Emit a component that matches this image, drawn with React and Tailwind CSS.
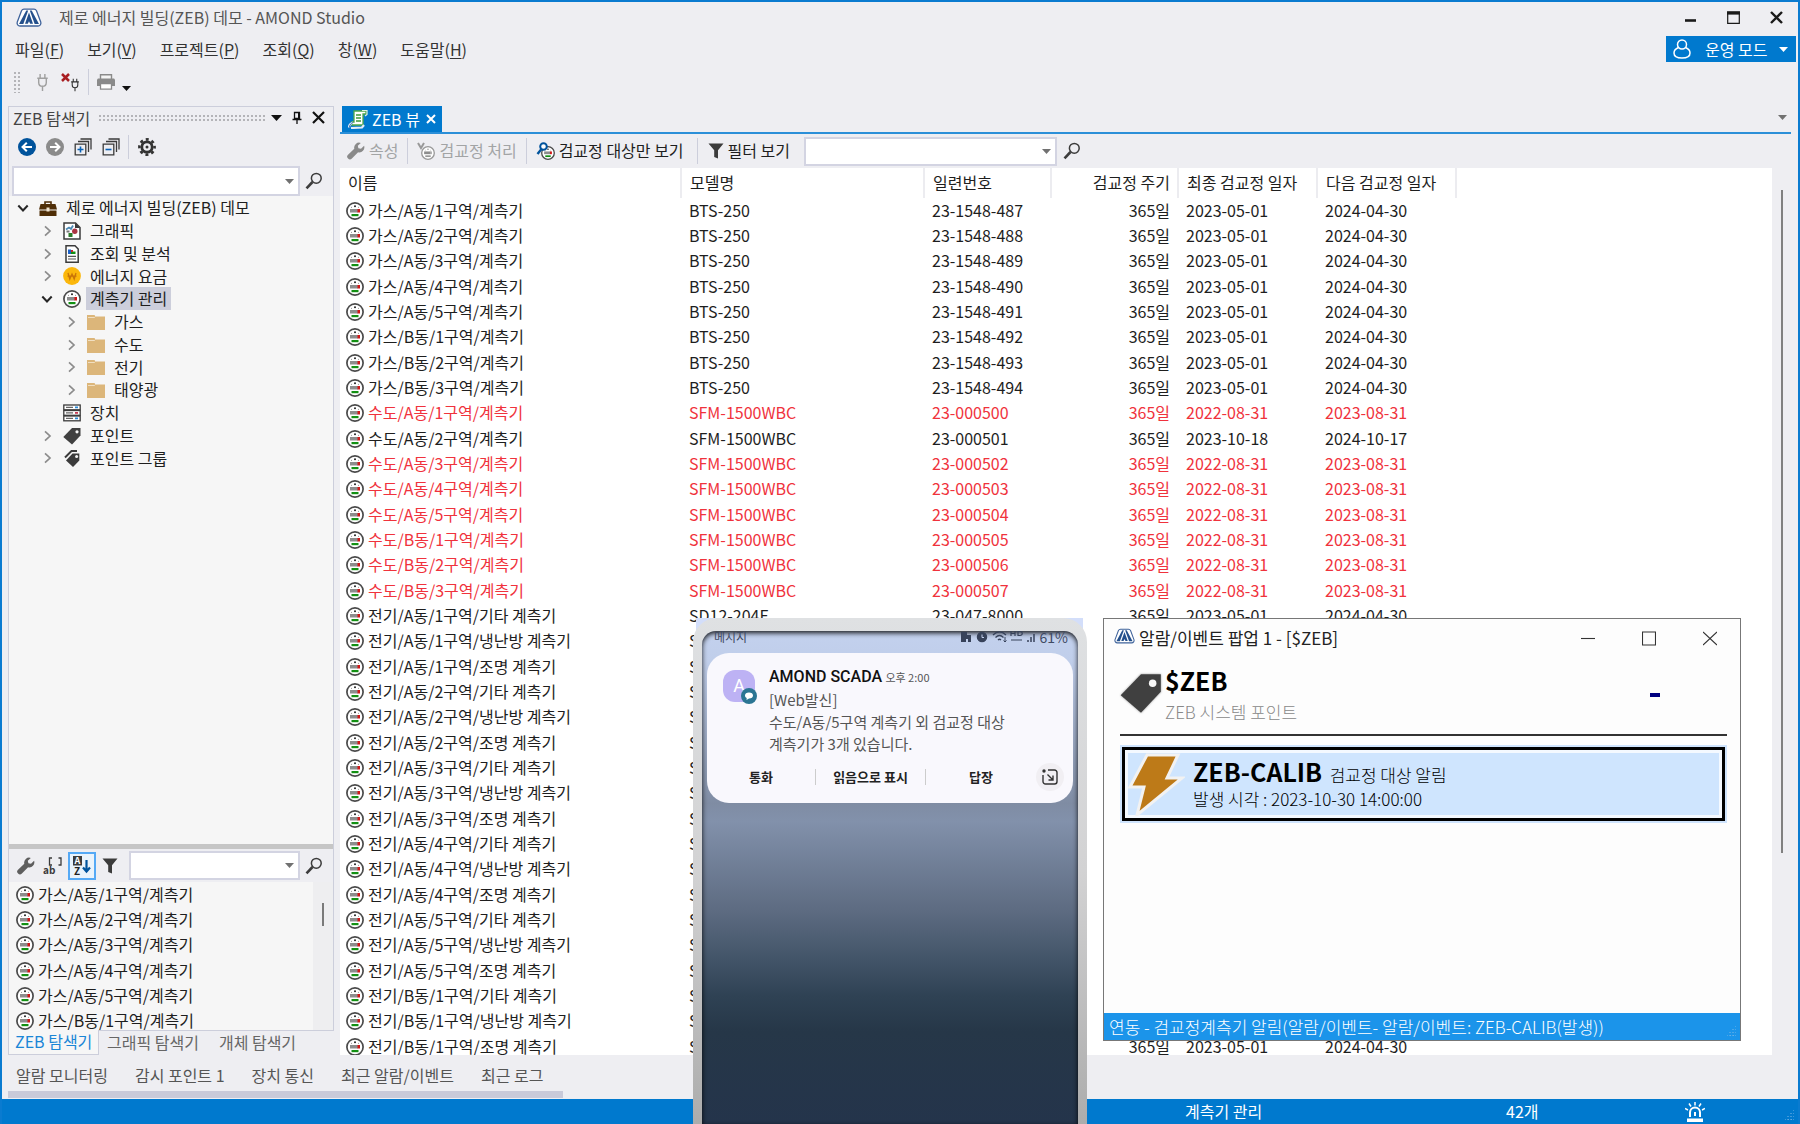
import { useState } from 'react';
import clsx from 'clsx';

const LIST_NAMES = ['A동/1', 'A동/2', 'A동/3', 'A동/4', 'A동/5', 'B동/1', 'B동/2', 'B동/3'];

function buildRows() {
  const rows = [];
  LIST_NAMES.forEach((n, i) => {
    rows.push({ name: `가스/${n}구역/계측기`, model: 'BTS-250', serial: `23-1548-${487 + i}`, last: '2023-05-01', next: '2024-04-30' });
  });
  LIST_NAMES.forEach((n, i) => {
    const done = i === 1;
    rows.push({
      name: `수도/${n}구역/계측기`,
      model: 'SFM-1500WBC',
      serial: `23-000${500 + i}`,
      last: done ? '2023-10-18' : '2022-08-31',
      next: done ? '2024-10-17' : '2023-08-31',
      overdue: !done,
    });
  });
  LIST_NAMES.slice(0, 6).forEach((n, i) => {
    ['기타', '냉난방', '조명'].forEach((kind, k) => {
      rows.push({ name: `전기/${n}구역/${kind} 계측기`, model: 'SD12-204F', serial: `23-047-${8000 + i * 3 + k}`, last: '2023-05-01', next: '2024-04-30' });
    });
  });
  return rows;
}

const ROWS = buildRows();

/* ---------- icons ---------- */

function Logo({ className }) {
  return (
    <svg viewBox="0 0 26 19" className={className}>
      <path d="M8 1.2h10a3 3 0 0 1 2.500 1.500l4.300 11.500a3 3 0 0 1-2.800 3.800H4a3 3 0 0 1-2.800-3.800L5.500 2.700A3 3 0 0 1 8 1.200z" fill="#fff" stroke="#3f639b" strokeWidth="1.300" />
      <path d="M10.300 2.500h1.900L7.300 16H3z" fill="#24508c" />
      <path d="M13.800 2.500h1.900L23 16h-4.300z" fill="#24508c" />
      <path d="M13 4.500l4 11.300h-2.800L13 13.200l-1.200 2.600H9z" fill="#24508c" />
    </svg>
  );
}

function Meter({ gray, className = 'w-[18px] h-[18px]' }) {
  return (
    <svg viewBox="0 0 18 18" className={clsx('shrink-0', className)}>
      <circle cx="9" cy="9" r="8.100" fill="#fff" stroke={gray ? '#999' : '#4a4a4a'} strokeWidth="1.700" />
      <circle cx="9" cy="4.300" r="1" fill={gray ? '#999' : '#222'} />
      <circle cx="5.500" cy="5.300" r=".5" fill="#777" />
      <circle cx="12.500" cy="5.300" r=".5" fill="#777" />
      <rect x="4" y="7" width="8" height="3.500" fill="#8d8d8d" />
      <rect x="11.500" y="7" width="2.500" height="3.500" fill={gray ? '#aaa' : '#d01616'} />
      <rect x="5.500" y="12" width="7" height="2.200" fill={gray ? '#999' : '#129012'} />
    </svg>
  );
}

function Search() {
  return (
    <svg viewBox="0 0 18 18" className="w-[18px] h-[18px]">
      <circle cx="11.300" cy="6.300" r="4.900" fill="none" stroke="#3c3c3c" strokeWidth="1.500" />
      <path d="M7.500 10l-6 6.300" stroke="#3c3c3c" strokeWidth="2.600" />
    </svg>
  );
}

function Wrench({ color = '#5e5e5e' }) {
  return (
    <svg viewBox="0 0 18 18" className="w-[18px] h-[18px]">
      <path d="M13.800.9a5 5 0 0 0-6.500 5.900L1 12.700a2.600 2.600 0 0 0 3.900 3.800l6.200-6.300a5 5 0 0 0 6-6.400L14 6.700l-2.600-.500-.6-2.500z" fill={color} />
    </svg>
  );
}

function Funnel() {
  return (
    <svg viewBox="0 0 16 16" className="w-4 h-4">
      <path d="M.5.500h15L10 7.200V15.500L6.200 14V7.200z" fill="#3b3b3b" />
    </svg>
  );
}

function Caret({ color = '#1e1e1e', className = 'w-[9px] h-[5px]' }) {
  return (
    <svg viewBox="0 0 10 5" className={className} preserveAspectRatio="none">
      <path d="M0 0h10L5 5z" fill={color} />
    </svg>
  );
}

function Chevron({ open }) {
  return open ? (
    <svg viewBox="0 0 12 12" className="w-3 h-3"><path d="M1.300 3.500L6 8.500l4.700-5" fill="none" stroke="#262626" strokeWidth="2" /></svg>
  ) : (
    <svg viewBox="0 0 12 12" className="w-3 h-3"><path d="M4 1.300L9 6l-5 4.700" fill="none" stroke="#8c8c8c" strokeWidth="1.700" /></svg>
  );
}

function Plug({ color, className }) {
  return (
    <svg viewBox="0 0 12 20" className={className} fill="none" stroke={color} strokeWidth="1.500">
      <path d="M3.500 1v4M8.500 1v4M.5 5.500h11M2 6v4c0 2.500 1.500 4 4 4s4-1.500 4-4V6M6 14v5" />
    </svg>
  );
}

function TreeIcon({ kind }) {
  const cls = 'w-[18px] h-[18px] shrink-0';
  switch (kind) {
    case 'case':
      return (
        <svg viewBox="0 0 18 18" className={cls}>
          <path d="M6 5V3h6v2" fill="none" stroke="#4f2e07" strokeWidth="1.600" />
          <path d="M1.500 5h15L18 10.500H0z" fill="#4f2e07" />
          <path d="M.5 11.500h17V17H.5z" fill="#4f2e07" />
          <rect x="7.500" y="8.500" width="3" height="4" fill="#f2e6d2" />
        </svg>
      );
    case 'graphic':
      return (
        <svg viewBox="0 0 18 18" className={cls}>
          <path d="M1 1h11.500L17 5.500V17H1z" fill="#fff" stroke="#3b3b3b" strokeWidth="1.500" />
          <path d="M12 1v5h5" fill="#3b3b3b" />
          <path d="M3 7.500l3-2 2 1.500 2-3.500" fill="none" stroke="#4d8bb5" strokeWidth="1.800" />
          <circle cx="11.800" cy="9.300" r="2.700" fill="#ab3442" />
          <rect x="5.500" y="11" width="4" height="4" fill="#2b7a2b" />
          <rect x="3.500" y="8.500" width="3" height="2" fill="#777" />
        </svg>
      );
    case 'report':
      return (
        <svg viewBox="0 0 18 18" className={cls}>
          <path d="M3 .8h9l3.200 3.200V17.200H3z" fill="#fff" stroke="#3b3b3b" strokeWidth="1.500" />
          <path d="M5 4.500h3V9H5z" fill="#1c62c9" />
          <path d="M8 6.500h4.500V9H8z" fill="#129012" />
          <path d="M8 5h2v2H8z" fill="#c92a2a" />
          <path d="M5 11.300h8M5 14h8" stroke="#555" strokeWidth="1.200" />
        </svg>
      );
    case 'won':
      return (
        <svg viewBox="0 0 18 18" className={cls}>
          <circle cx="9" cy="9" r="8.900" fill="#fbb70b" />
          <path d="M5 6l1.800 6L9 7l2.200 5L13 6M4.500 9.200h9" fill="none" stroke="#c97508" strokeWidth="1.300" />
        </svg>
      );
    case 'meter':
      return <Meter />;
    case 'folder':
      return (
        <svg viewBox="0 0 18 18" className={cls}>
          <path d="M0 2h7.500l1 1.500H18V17H0z" fill="#dcb67a" />
          <path d="M1 4.500h6.500l1-1" fill="none" stroke="#f6ead3" strokeWidth=".8" />
        </svg>
      );
    case 'device':
      return (
        <svg viewBox="0 0 18 18" className={cls}>
          {[1, 6.5, 12].map((y) => <rect key={y} x=".8" y={y} width="16.400" height="4.800" fill="#fff" stroke="#3b3b3b" strokeWidth="1.300" />)}
          <path d="M3 3.400h7M3 8.900h7M3 14.400h7" stroke="#666" strokeWidth="1.300" />
          <path d="M12 3.400h3M12 14.400h3" stroke="#2b8ad6" strokeWidth="1.700" />
          <path d="M12 8.900h3" stroke="#c3304a" strokeWidth="1.700" />
        </svg>
      );
    case 'group':
      return (
        <svg viewBox="0 0 18 18" className={cls}>
          <path d="M2 8.500L8.500 2H14" fill="none" stroke="#3b3b3b" strokeWidth="2" />
          <path d="M9.500 4.500h6.800v7L10 18l-7-6.500z" fill="#3b3b3b" />
          <circle cx="13.600" cy="7.500" r="1.500" fill="#f6f6f6" />
        </svg>
      );
    default:
      return <Tag className={cls} />;
  }
}

function Tag({ className }) {
  return (
    <svg viewBox="0 0 18 18" className={className}>
      <path d="M9 1h8.500v7.500L9 17.500.3 10z" fill="#404040" />
      <circle cx="14" cy="4.800" r="1.600" fill="#f6f6f6" />
    </svg>
  );
}

/* ---------- shared controls ---------- */

function Combo({ label, className }) {
  return (
    <div className={clsx('flex items-center border-2 border-[#d3d4e2] bg-white', className)}>
      <input aria-label={label} className="min-w-0 flex-1 h-full px-1 outline-none bg-transparent" />
      <button aria-label={`${label} 목록`} className="px-1"><Caret color="#717171" /></button>
    </div>
  );
}

function Divider({ className }) {
  return <span className={clsx('w-px bg-[#cccedb]', className)} />;
}

function ToolButton({ icon, children, disabled }) {
  return (
    <button disabled={disabled} className={clsx('flex items-center gap-1 whitespace-nowrap', disabled ? 'text-[#a2a4a5]' : 'text-[#1e1e1e]')}>
      {icon}
      <span className="pb-0.5">{children}</span>
    </button>
  );
}

/* ---------- window head ---------- */

const MENUS = [['파일', 'F'], ['보기', 'V'], ['프로젝트', 'P'], ['조회', 'Q'], ['창', 'W'], ['도움말', 'H']];

function Head() {
  return (
    <header className="shrink-0">
      <div className="h-8 flex items-center pl-[14px] pr-[15px] pb-0.5">
        <Logo className="w-[26px] h-[19px]" />
        <h1 className="ml-[17px] text-[#555]">제로 에너지 빌딩(ZEB) 데모 - AMOND Studio</h1>
        <div className="ml-auto flex items-center gap-[30px]">
          <button aria-label="최소화">
            <svg viewBox="0 0 13 13" className="w-[13px] h-[13px]"><path d="M1 9.500h11" stroke="#1a1a1a" strokeWidth="2.600" /></svg>
          </button>
          <button aria-label="최대화">
            <svg viewBox="0 0 13 13" className="w-[13px] h-[13px]"><path d="M.7 1h11.600v11.300H.7z" fill="none" stroke="#1a1a1a" strokeWidth="1.200" /><path d="M0 2h13" stroke="#1a1a1a" strokeWidth="3.200" /></svg>
          </button>
          <button aria-label="닫기">
            <svg viewBox="0 0 13 13" className="w-[13px] h-[13px]"><path d="M1 1l11 11M12 1L1 12" stroke="#1a1a1a" strokeWidth="2.400" /></svg>
          </button>
        </div>
      </div>
      <div className="h-8 flex items-center pl-[13px] pr-0.5 pb-0.5">
        <nav className="flex gap-[23px] text-[#333]">
          {MENUS.map(([name, key]) => (
            <button key={key}>{name}(<u className="underline-offset-2">{key}</u>)</button>
          ))}
        </nav>
        <button className="ml-auto w-[130px] h-[26px] flex items-center pl-[7px] pr-2 bg-[#0079ce] text-white">
          <svg viewBox="0 0 18 20" className="w-[18px] h-5" fill="none" stroke="#fff" strokeWidth="1.500">
            <circle cx="9" cy="5.500" r="4.500" />
            <path d="M5.500 8.500C2.500 9.800 1 11.800 1 14c0 3.300 3.500 5 8 5s8-1.700 8-5c0-2.200-1.500-4.200-4.500-5.500" />
          </svg>
          <span className="ml-[14px] mr-auto">운영 모드</span>
          <Caret color="#fff" />
        </button>
      </div>
      <div className="h-8 flex items-center pl-[11px]">
        <span className="w-2 h-[22px] bg-[radial-gradient(circle,#b4b4b8_1px,transparent_1px)] bg-[length:4px_4px]" />
        <button aria-label="연결" className="ml-[15px]"><Plug color="#a0a0a0" className="w-[13px] h-[19px]" /></button>
        <button aria-label="연결 끊기" className="ml-3 flex">
          <svg viewBox="0 0 9 9" className="w-[9px] h-[9px]"><path d="M1 1l7 7M8 1L1 8" stroke="#a81e22" strokeWidth="2.500" /></svg>
          <Plug color="#2f2f2f" className="w-[10px] h-[14px] mt-[5px]" />
        </button>
        <Divider className="ml-2 h-[26px]" />
        <button aria-label="인쇄" className="ml-2 flex items-center gap-[7px]">
          <svg viewBox="0 0 18 16" className="w-[18px] h-4">
            <path d="M3.500 5V.8h11V5" fill="#f4f4f4" stroke="#8a8a8a" strokeWidth="1.400" />
            <path d="M1 4.500h16l1 1V12H0V5.500z" fill="#8a8a8a" />
            <path d="M3.500 9.500h11v5.700h-11z" fill="#fff" stroke="#8a8a8a" strokeWidth="1.300" />
          </svg>
          <Caret color="#111" className="w-[9px] h-[5px] mt-3" />
        </button>
      </div>
    </header>
  );
}

/* ---------- left explorer ---------- */

const TREE = [
  { depth: 0, icon: 'case', label: '제로 에너지 빌딩(ZEB) 데모', open: true },
  { depth: 1, icon: 'graphic', label: '그래픽' },
  { depth: 1, icon: 'report', label: '조회 및 분석' },
  { depth: 1, icon: 'won', label: '에너지 요금' },
  { depth: 1, icon: 'meter', label: '계측기 관리', open: true },
  { depth: 2, icon: 'folder', label: '가스' },
  { depth: 2, icon: 'folder', label: '수도' },
  { depth: 2, icon: 'folder', label: '전기' },
  { depth: 2, icon: 'folder', label: '태양광' },
  { depth: 1, icon: 'device', label: '장치', leaf: true },
  { depth: 1, icon: 'tag', label: '포인트' },
  { depth: 1, icon: 'group', label: '포인트 그룹' },
];

const INDENT = ['pl-[7px]', 'pl-[31px]', 'pl-[55px]'];

function Tree() {
  const [selected, setSelected] = useState('계측기 관리');
  return (
    <ul className="flex-1 min-h-0 overflow-hidden bg-[#f6f6f6]">
      {TREE.map((n) => (
        <li key={n.label} className={clsx('h-[23px] nth-[4n]:h-[22px] flex items-center', INDENT[n.depth])}>
          <span className="w-[23px] pl-px">{!n.leaf && <Chevron open={n.open} />}</span>
          <TreeIcon kind={n.icon} />
          <button
            onClick={() => setSelected(n.label)}
            className={clsx('ml-[5px] h-[23px] px-1 pb-0.5 text-[#1e1e1e] whitespace-nowrap', selected === n.label && 'bg-[#cccedb]')}
          >
            {n.label}
          </button>
        </li>
      ))}
    </ul>
  );
}

function Explorer() {
  return (
    <aside className="w-[326px] shrink-0 flex flex-col">
      <div className="flex-1 min-h-0 flex flex-col border border-[#cccedb]">
        <div className="h-[21px] shrink-0 flex items-center pl-1 pr-2 text-[#444]">
          <h2>ZEB 탐색기</h2>
          <span className="ml-2 flex-1 h-2 bg-[radial-gradient(circle,#b4b4b8_1px,transparent_1px)] bg-[length:4px_4px]" />
          <button aria-label="패널 메뉴" className="ml-1"><Caret color="#111" className="w-[11px] h-[6px]" /></button>
          <button aria-label="고정" className="ml-[10px]">
            <svg viewBox="0 0 10 14" className="w-[10px] h-[14px]"><path d="M2.500 1.500h5v6h-5zM0.500 8.500h9M5 8.500V13" fill="none" stroke="#111" strokeWidth="1.300" /><path d="M6 1.500h1.500v6H6z" fill="#111" /></svg>
          </button>
          <button aria-label="닫기" className="ml-[10px]">
            <svg viewBox="0 0 13 13" className="w-[13px] h-[13px]"><path d="M1 1l11 11M12 1L1 12" stroke="#111" strokeWidth="2.200" /></svg>
          </button>
        </div>
        <div className="h-[38px] shrink-0 flex items-center pl-[9px] gap-[10px]">
          <button aria-label="뒤로">
            <svg viewBox="0 0 18 18" className="w-[18px] h-[18px]"><circle cx="9" cy="9" r="9" fill="#00539c" /><path d="M14 9H5M8.800 4.700L4.500 9l4.300 4.300" fill="none" stroke="#fff" strokeWidth="2" /></svg>
          </button>
          <button aria-label="앞으로">
            <svg viewBox="0 0 18 18" className="w-[18px] h-[18px]"><circle cx="9" cy="9" r="9" fill="#8b8b8b" /><path d="M4 9h9M9.200 4.700L13.500 9l-4.300 4.300" fill="none" stroke="#fff" strokeWidth="2" /></svg>
          </button>
          {['모두 펼치기', '모두 접기'].map((label, i) => (
            <button key={label} aria-label={label}>
              <svg viewBox="0 0 18 18" className="w-[18px] h-[18px]" fill="none" stroke="#3b3b3b" strokeWidth="1.300">
                <path d="M6.500 1h10.500v10.500M4 3.500h10.500V14M1.200 6.200h10.600v10.600H1.200z" />
                <path d={i === 0 ? 'M3.500 11.500h6M6.500 8.500v6' : 'M3.500 11.500h6'} stroke="#0a62b5" strokeWidth="1.600" />
              </svg>
            </button>
          ))}
          <Divider className="h-6 -ml-0.5" />
          <button aria-label="설정" className="-ml-px">
            <svg viewBox="0 0 18 18" className="w-[18px] h-[18px]">
              <circle cx="9" cy="9" r="5.200" fill="none" stroke="#333" strokeWidth="2.800" />
              <circle cx="9" cy="9" r="7.600" fill="none" stroke="#333" strokeWidth="2.600" strokeDasharray="3 2.970" strokeDashoffset="1.500" />
              <circle cx="9" cy="9" r="1.500" fill="#333" />
            </svg>
          </button>
        </div>
        <div className="h-[30px] shrink-0 flex items-start pl-[3px] gap-[5px]">
          <Combo label="탐색기 검색" className="w-[288px] h-[30px]" />
          <button aria-label="찾기" className="h-[30px]"><Search /></button>
        </div>
        <Tree />
        <div className="h-[5px] shrink-0 bg-[#c6c6c6]" />
        <div className="h-[33px] shrink-0 flex items-center pl-[8px]">
          <button aria-label="속성"><Wrench /></button>
          <button aria-label="분류별" className="ml-2">
            <svg viewBox="0 0 20 18" className="w-5 h-[18px] overflow-visible">
              <path d="M9 1H6.500v7H9M15.500 1H18v7h-2.500" fill="none" stroke="#3b3b3b" strokeWidth="1.300" />
              <text x="0" y="17" fontSize="10" fontWeight="700" fill="#3b3b3b">ab</text>
            </svg>
          </button>
          <button aria-label="이름순" className="ml-[5px] w-7 h-7 flex items-center justify-center border-2 border-[#55a9f5] bg-[#eaf3fb]">
            <svg viewBox="0 0 20 20" className="w-5 h-5 overflow-visible">
              <rect x="1" y="0" width="9" height="9.500" fill="#3b3b3b" />
              <text x="2.500" y="8" fontSize="9" fontWeight="700" fill="#fff">A</text>
              <text x="2" y="19" fontSize="10" fontWeight="700" fill="#222">Z</text>
              <path d="M14.500 4v11M11 11.500l3.500 4 3.500-4" fill="none" stroke="#00539c" strokeWidth="2.200" />
            </svg>
          </button>
          <button aria-label="필터" className="ml-[6px]"><Funnel /></button>
          <Combo label="목록 검색" className="ml-[11px] w-[171px] h-[29px]" />
          <button aria-label="찾기" className="ml-[5px]"><Search /></button>
        </div>
        <div className="h-[148px] shrink-0 flex overflow-hidden bg-[#f6f6f6]">
          <ul className="flex-1 text-[#1e1e1e]">
            {ROWS.slice(0, 6).map((r) => (
              <li key={r.name} className="h-[25px] nth-[3n]:h-[26px] flex items-center gap-1 pl-[7px]"><Meter /><span className="pb-0.5">{r.name}</span></li>
            ))}
          </ul>
          <div className="w-5 bg-[#eeeef0] flex justify-center pt-[21px]"><span className="w-0.5 h-[23px] bg-[#7a7a7a]" /></div>
        </div>
      </div>
      <div className="h-6 shrink-0 flex items-start text-[#666]">
        <button className="-mt-px h-[25px] w-[91px] pl-[6px] pb-1 text-left whitespace-nowrap bg-[#f6f6f6] border border-t-0 border-[#cccedb] text-[#1a86d6]">ZEB 탐색기</button>
        <button className="ml-2">그래픽 탐색기</button>
        <button className="ml-5">개체 탐색기</button>
      </div>
    </aside>
  );
}

/* ---------- ZEB view ---------- */

function Th({ children, className }) {
  return <th className={clsx('h-[30px] p-0 pl-2 pb-0.5 font-normal text-left border-r-2 border-[#ececf0] whitespace-nowrap', className)}>{children}</th>;
}

function MeterTable() {
  return (
    <div className="flex-1 min-w-0 overflow-hidden bg-white">
      <table className="w-full table-fixed border-collapse text-[#1e1e1e]">
        <colgroup>
          <col className="w-[341px]" />
          <col className="w-[243px]" />
          <col className="w-[127px]" />
          <col className="w-[127px]" />
          <col className="w-[139px]" />
          <col className="w-[139px]" />
          <col />
        </colgroup>
        <thead>
          <tr>
            <Th>이름</Th>
            <Th>모델명</Th>
            <Th>일련번호</Th>
            <Th className="pl-0 pr-[7px] text-right">검교정 주기</Th>
            <Th>최종 검교정 일자</Th>
            <Th>다음 검교정 일자</Th>
            <th />
          </tr>
        </thead>
        <tbody>
          {ROWS.map((r) => (
            <tr key={r.name} className={clsx('h-[25px] nth-[3n]:h-[26px] whitespace-nowrap', r.overdue && 'text-[#f0323c]')}>
              <td className="p-0 pl-[6px]"><div className="flex items-center gap-1"><Meter /><span className="pb-0.5">{r.name}</span></div></td>
              <td className="p-0 pl-2 pb-0.5">{r.model}</td>
              <td className="p-0 pl-2 pb-0.5">{r.serial}</td>
              <td className="p-0 pr-2 pb-0.5 text-right">365일</td>
              <td className="p-0 pl-2 pb-0.5">{r.last}</td>
              <td className="p-0 pl-2 pb-0.5">{r.next}</td>
              <td className="p-0" />
            </tr>
          ))}
        </tbody>
      </table>
    </div>
  );
}

function ZebView() {
  return (
    <main className="flex-1 min-w-0 flex flex-col">
      <div className="h-[28px] shrink-0 flex items-end border-b-2 border-[#2b8fd8]">
        <div className="ml-0.5 h-[26px] w-[100px] flex items-center pl-[6px] bg-[#0079ce] text-white">
          <svg viewBox="0 0 20 20" className="w-5 h-5">
            <path d="M6 2h12v3h-3v11H4v-3h2z" fill="#fff" stroke="#4fa84a" strokeWidth="1.300" />
            <path d="M8 6h5M8 9h5M8 12h5" stroke="#3f9a3a" strokeWidth="1.400" />
            <path d="M14 1.500h5v4l-2 1.500" fill="none" stroke="#dff3dd" strokeWidth="1.200" />
            <path d="M1 18.500c0-3 1.500-4 4-5M3 19l11-.500 2-2.500" fill="none" stroke="#e4edf8" strokeWidth="2.200" />
            <path d="M1.500 18.500c0-3 1.500-4 3.500-5" fill="none" stroke="#3567ab" strokeWidth="1" />
          </svg>
          <span className="ml-1">ZEB 뷰</span>
          <button aria-label="탭 닫기" className="ml-[6px]">
            <svg viewBox="0 0 10 10" className="w-[10px] h-[10px]"><path d="M1 1l8 8M9 1L1 9" stroke="#fff" strokeWidth="2" /></svg>
          </button>
        </div>
        <button aria-label="탭 목록" className="ml-auto mr-1 mb-3"><Caret color="#717171" /></button>
      </div>
      <div className="h-[34px] shrink-0 flex items-center pl-[7px]">
        <ToolButton disabled icon={<Wrench color="#8a8a8a" />}>속성</ToolButton>
        <Divider className="mx-[9px] h-[26px]" />
        <ToolButton
          disabled
          icon={
            <span className="flex">
              <svg viewBox="0 0 8 8" className="w-2 h-2"><path d="M1 1l3 5 3-5" fill="none" stroke="#999" strokeWidth="2" /></svg>
              <Meter gray className="w-[14px] h-[14px] -ml-1 mt-1" />
            </span>
          }
        >
          검교정 처리
        </ToolButton>
        <Divider className="mx-[9px] h-[26px]" />
        <ToolButton
          icon={
            <span className="flex">
              <svg viewBox="0 0 12 14" className="relative w-3 h-[14px]"><circle cx="7.500" cy="4.500" r="3.300" fill="#fff" stroke="#00539c" strokeWidth="2" /><path d="M5.500 7L1.500 12" stroke="#00539c" strokeWidth="2.400" /></svg>
              <Meter className="w-[14px] h-[14px] -ml-[7px] mt-1" />
            </span>
          }
        >
          검교정 대상만 보기
        </ToolButton>
        <Divider className="ml-[13px] mr-[10px] h-[26px]" />
        <ToolButton icon={<Funnel />}>필터 보기</ToolButton>
        <Combo label="계측기 검색" className="ml-[14px] w-[253px] h-[29px]" />
        <button aria-label="찾기" className="ml-[6px]"><Search /></button>
      </div>
      <div className="flex-1 min-h-0 flex">
        <MeterTable />
        <div className="w-[19px] shrink-0 flex justify-center pt-[22px]"><span className="w-0.5 h-[663px] bg-[#808080]" /></div>
      </div>
    </main>
  );
}

/* ---------- floating: phone notification ---------- */

function Phone() {
  return (
    <div className="absolute left-[691px] bottom-0 w-[394px] h-[506px] overflow-hidden">
      <div className="absolute top-0 left-[3px] right-1 h-6 bg-[#d3defa]" />
      <div className="relative h-full pt-[13px] px-[9px] rounded-t-[24px] bg-linear-to-b from-[#dfe1e3] via-[#d2d2d3] to-[#acacac]">
        <div className="h-full rounded-t-[14px] overflow-hidden bg-[linear-gradient(180deg,#c3d1ee_0px,#c0ceea_30px,#7f8ca3_172px,#8291ab_190px,#5d6b81_280px,#44566a_325px,#2f4254_365px,#263748_400px,#24344b_493px)] shadow-[inset_0_2px_5px_0px_rgba(0,0,0,0.9)]">
          <div className="h-[22px] flex items-start justify-between pl-3 pr-[10px] text-[12px] leading-3 text-[#3f4a63]">
            <span>메시지</span>
            <span className="flex items-center gap-[5px]">
              <svg viewBox="0 0 74 12" className="w-[74px] h-3" fill="none" stroke="#37425a" strokeWidth="1.500">
                <path d="M0 1h6v3h4v7H7V8H5v3H0z" fill="#37425a" stroke="none" />
                <circle cx="21" cy="6" r="4.500" fill="#37425a" />
                <path d="M21 3.500V6.500h2" stroke="#c3d0ee" strokeWidth="1" />
                <path d="M32 4c4-4 9-4 13 0M34.500 6.500c2.500-2.500 5.500-2.500 8 0M37 9c1-1 2-1 3 0" strokeWidth="1.300" />
                <path d="M44 6v5M42.500 9.500l1.500 1.500 1.500-1.500" strokeWidth="1" />
                <path d="M50 0v5M54 0v5M50 2.500h4M57 .500h2c3 0 3 4 0 4h-2zM50 9h11" strokeWidth="1.200" />
                <path d="M67 11V9M70 11V6M73 11V3" />
              </svg>
              <span className="text-[14px]">61%</span>
            </span>
          </div>
          <section className="mx-[5px] h-[150px] rounded-[22px] bg-[#f9f8fd] flex flex-col">
            <div className="flex pt-[13px] pl-4">
              <div className="relative mt-1 w-8 h-8 shrink-0 rounded-[12px] bg-[#bdb2f4] text-white text-center text-[18px] leading-8 font-[Roboto]">
                A
                <svg viewBox="0 0 16 16" className="absolute left-[18px] top-[18px] w-4 h-4">
                  <circle cx="8" cy="8" r="8" fill="#2b7593" />
                  <path d="M8 4.500c2.500 0 4 1.200 4 3s-1.500 3-4 3l-2.500 1.500.2-2C4.500 9.500 4 8.500 4 7.500c0-1.800 1.500-3 4-3z" fill="#fff" />
                </svg>
              </div>
              <div className="ml-[14px] text-[15px] leading-[22px] text-[#555]">
                <p className="leading-5 mb-0.5"><b className="font-[Roboto] font-medium text-[16px] text-[#111]">AMOND SCADA</b> <span className="text-[11px]">오후 2:00</span></p>
                <p>[Web발신]</p>
                <p>수도/A동/5구역 계측기 외 검교정 대상</p>
                <p>계측기가 3개 있습니다.</p>
              </div>
            </div>
            <div className="mt-[14px] flex items-center text-[13px] leading-4 font-bold text-[#222]">
              <button className="w-[108px]">통화</button>
              <span className="w-px h-4 bg-[#ccc]" />
              <button className="w-[109px]">읽음으로 표시</button>
              <span className="w-px h-4 bg-[#ccc]" />
              <button className="w-[110px]">답장</button>
              <button aria-label="팝업으로 열기" className="w-7 h-7 -my-[6px] rounded-full bg-[#f1eff3] flex items-center justify-center">
                <svg viewBox="0 0 16 16" className="w-4 h-4" fill="none" stroke="#333" strokeWidth="1.400">
                  <path d="M6 1h6.500A2.500 2.500 0 0 1 15 3.500v9a2.500 2.500 0 0 1-2.500 2.500h-9A2.500 2.500 0 0 1 1 12.500V6M5.500 5.500l5 5M11 6.500V11H6.500" />
                  <circle cx="2" cy="2" r="1.700" fill="#333" stroke="none" />
                </svg>
              </button>
            </div>
          </section>
        </div>
      </div>
    </div>
  );
}

/* ---------- floating: alarm popup ---------- */

function Grip({ className }) {
  return (
    <svg viewBox="0 0 10 10" className={clsx('w-[10px] h-[10px]', className)}>
      <path d="M10 0v10H0" fill="none" stroke="#7fb9e6" strokeWidth="1" strokeDasharray="1 2" />
      <path d="M7 3v7M4 6v4" stroke="#7fb9e6" strokeWidth="1" strokeDasharray="1 2" />
    </svg>
  );
}

function AlarmPopup() {
  return (
    <section className="absolute right-[57px] top-[616px] w-[638px] h-[423px] flex flex-col bg-[#fdfdfd] border border-[#777]">
      <div className="h-10 flex items-center pl-[10px] pr-[23px] pb-0.5 text-[#222]">
        <Logo className="w-[21px] h-[16px] -mt-1" />
        <h2 className="ml-1 text-[17px]">알람/이벤트 팝업 1 - [$ZEB]</h2>
        <div className="ml-auto flex items-center gap-[47px]">
          {[['최소화', 'M0 7.500h14'], ['최대화', 'M.5 1h13v13H.5z'], ['닫기', 'M0 1l14 13M14 1L0 14']].map(([label, d]) => (
            <button key={label} aria-label={label}>
              <svg viewBox="0 0 14 15" className="w-[14px] h-[15px]"><path d={d} fill="none" stroke="#333" strokeWidth="1.100" /></svg>
            </button>
          ))}
        </div>
      </div>
      <div className="ml-4 mr-[13px] h-[77px] flex border-b-2 border-[#333]">
        <Tag className="mt-[11px] w-[42px] h-[46px] drop-shadow-[0_0_1px_#999]" />
        <div className="ml-[3px] mt-[5px]">
          <p className="text-[25px] leading-8 font-bold text-black">$ZEB</p>
          <p className="text-[17px] leading-8 font-light text-[#888]">ZEB 시스템 포인트</p>
        </div>
        <span className="ml-auto mr-[67px] mt-[34px] w-[10px] h-1 bg-[#000080]" />
      </div>
      <div className="ml-4 mr-[13px] mt-[9px] p-0.5 bg-[#cfe4fd]">
        <div className="h-[74px] border-[3px] border-black bg-[#cfe5fe] flex items-center shadow-[inset_0_0_0_3px_#f4f9ff]">
          <svg viewBox="0 0 58 64" className="ml-0.5 w-[58px] h-16">
            <path d="M20 3h31L40 26h15L10 63l7-28H3z" fill="#bd7a18" stroke="#f2f2f2" strokeWidth="3" />
          </svg>
          <div className="ml-2 pb-0.5 text-[17px] text-black font-light">
            <p className="leading-7 whitespace-nowrap"><b className="text-[25px] font-bold">ZEB-CALIB</b>&nbsp; 검교정 대상 알림</p>
            <p className="leading-5">발생 시각 : 2023-10-30 14:00:00</p>
          </div>
        </div>
      </div>
      <div className="mt-auto h-[27px] flex items-center pl-[5px] pr-1 bg-[#1b94ea] text-white text-[17px] font-light">
        <p className="whitespace-nowrap">연동 - 검교정계측기 알림(알람/이벤트- 알람/이벤트: ZEB-CALIB(발생))</p>
        <Grip className="ml-auto self-end mb-1" />
      </div>
    </section>
  );
}

export default function App() {
  return (
    <div className="relative h-screen overflow-hidden flex flex-col bg-[#eeeef2] border-2 border-b-0 border-[#0a7bd0] font-['Noto_Sans_CJK_KR','Noto_Sans',sans-serif] text-[16px] leading-[22px]">
      <Head />
      <div className="flex-1 min-h-0 flex gap-[6px] pl-[6px] pr-[7px] pt-2">
        <Explorer />
        <ZebView />
      </div>
      <div className="h-11 shrink-0 flex flex-col justify-between pb-px pl-[6px]">
        <nav className="flex gap-[27px] pl-2 pt-[9px] text-[#555]">
          {['알람 모니터링', '감시 포인트 1', '장치 통신', '최근 알람/이벤트', '최근 로그'].map((t) => <button key={t}>{t}</button>)}
        </nav>
        <div className="w-[555px] h-[7px] bg-[#c9cad9]" />
      </div>
      <footer className="h-[25px] shrink-0 flex items-center -mx-0.5 pr-[6px] bg-[#0079ce] text-white">
        <span className="ml-auto w-[321px] pb-0.5">계측기 관리</span>
        <span className="w-[179px] pb-0.5">42개</span>
        <svg viewBox="0 0 20 20" className="w-5 h-5">
          <path d="M5 15V10.500a5 5 0 0 1 10 0V15" fill="none" stroke="#fff" strokeWidth="2" />
          <path d="M2 16.500h16V20H2zM9 10h2v4H9z" fill="#fff" />
          <path d="M10 0v3.500M4 1.500l2 3M16 1.500l-2 3M0 6.500l3 1.500M20 6.500l-3 1.500" stroke="#fff" strokeWidth="1.500" />
        </svg>
        <Grip className="ml-[79px] self-end mb-1" />
      </footer>
      <Phone />
      <AlarmPopup />
    </div>
  );
}
